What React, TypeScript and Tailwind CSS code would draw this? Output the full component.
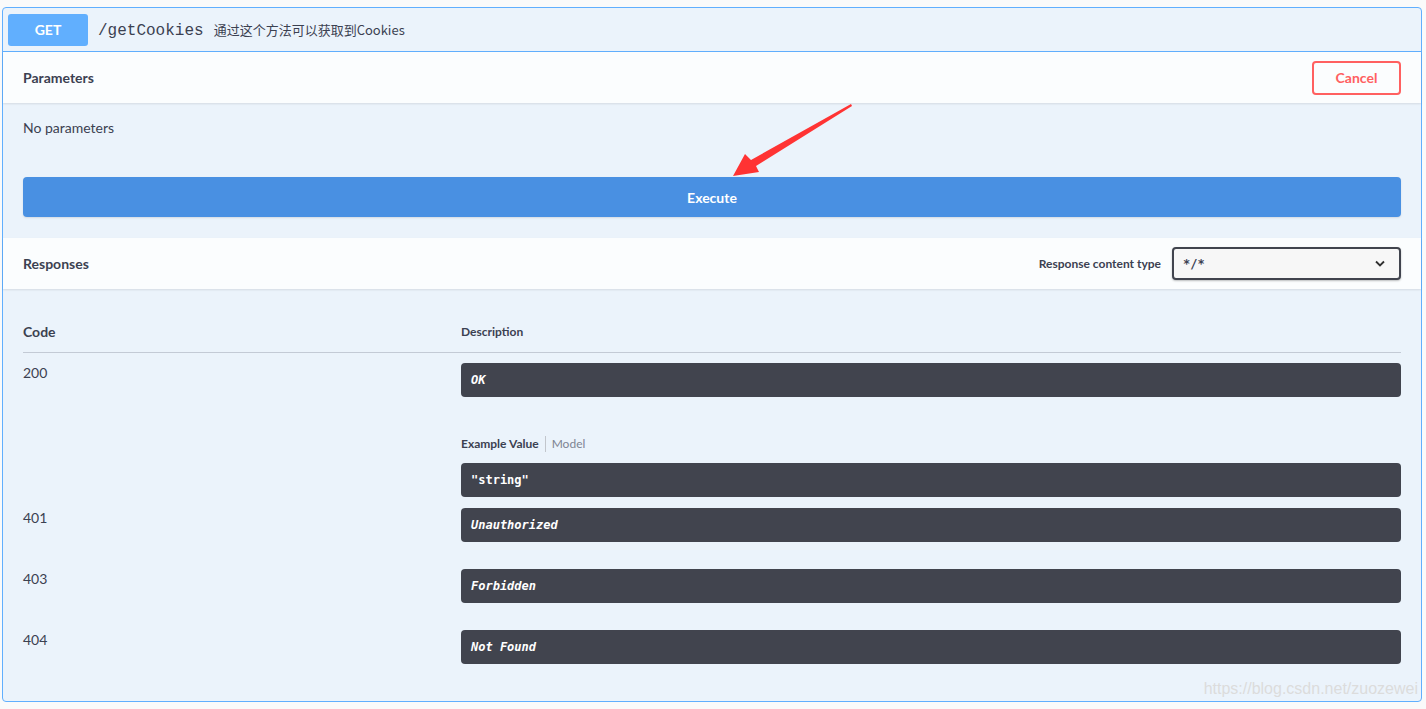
import React from "react";

const sans = "font-['Lato','Noto_Sans_CJK_SC',sans-serif]";
const mono = "font-['DejaVu_Sans_Mono','Liberation_Mono',monospace]";

function DarkBox({ children, italic = true }: { children: React.ReactNode; italic?: boolean }) {
  return (
    <div
      className={`h-[34px] w-full rounded-[4px] bg-[#41444e] px-[10px] flex items-center text-white text-[12px] font-bold ${mono} ${
        italic ? "italic" : ""
      }`}
    >
      {children}
    </div>
  );
}

function Row({ code, children, h }: { code: string; children: React.ReactNode; h?: string }) {
  return (
    <div className={`flex pt-[10px] ${h ?? ""}`}>
      <div className="w-[438px] shrink-0 text-[14px] leading-[20px] text-[#3b4151]">{code}</div>
      <div className="flex-1">{children}</div>
    </div>
  );
}

export default function App() {
  return (
    <div className={`relative w-[1426px] h-[709px] bg-[#fafafa] overflow-hidden ${sans}`}>
      <div className="ml-[2px] mr-[4px] mt-[7px] h-[695px] rounded-[4px] border border-[#61affe] bg-[#ebf3fb] flex flex-col">
        {/* header */}
        <div className="h-[44px] border-b border-[#61affe] flex items-center px-[5px]">
          <div className="w-[80px] h-[32px] rounded-[3px] bg-[#61affe] text-white font-bold text-[14px] flex items-center justify-center">
            GET
          </div>
          <div className={`ml-[10px] mt-[2px] text-[16px] text-[#3b4151] font-['Liberation_Mono',monospace]`}>/getCookies</div>
          <div className="ml-[10px] mt-[1px] text-[13px] text-[#3b4151] font-['Noto_Sans_CJK_SC',sans-serif]">
            通过这个方法可以获取到Cookies
          </div>
        </div>

        {/* parameters header */}
        <div className="h-[51px] bg-white/80 shadow-[0_1px_2px_rgba(0,0,0,0.1)] flex items-center justify-between pl-[20px] pr-[20px]">
          <div className="text-[14px] font-bold text-[#3b4151]">Parameters</div>
          <div className="w-[89px] h-[34px] rounded-[4px] border-2 border-[#ff6060] text-[#ff6060] text-[14px] font-bold flex items-center justify-center bg-transparent">
            Cancel
          </div>
        </div>

        {/* parameters body */}
        <div className="px-[20px] pt-[15px]">
          <div className="text-[14px] leading-[20px] text-[#3b4151]">No parameters</div>
        </div>
        <div className="px-[20px] pt-[39px]">
          <div className="h-[40px] rounded-[4px] bg-[#4990e2] text-white text-[14px] font-bold flex items-center justify-center shadow-[0_1px_2px_rgba(0,0,0,0.1)]">
            Execute
          </div>
        </div>

        {/* responses header */}
        <div className="mt-[21px] h-[51px] bg-white/80 shadow-[0_1px_2px_rgba(0,0,0,0.1)] flex items-center justify-between px-[20px]">
          <div className="text-[14px] font-bold text-[#3b4151]">Responses</div>
          <div className="flex items-center">
            <div className="text-[12px] font-bold text-[#3b4151] mr-[11px]">Response content type</div>
            <div className="w-[229px] h-[33px] rounded-[4px] border-2 border-[#41444e] bg-[#f7f7f7] flex items-center justify-between pl-[9px] pr-[14px] shadow-[0_1px_2px_rgba(0,0,0,0.25)]">
              <span className={`text-[12px] font-bold text-[#3b4151] ${mono}`}>*/*</span>
              <svg width="10" height="7" viewBox="0 0 10 7">
                <path d="M1 1.5 L5 5.5 L9 1.5" fill="none" stroke="#303030" strokeWidth="1.8" />
              </svg>
            </div>
          </div>
        </div>

        {/* table */}
        <div className="px-[20px] pt-[22px]">
          <div className="h-[42px] flex items-center border-b border-[#c3cad5]">
            <div className="w-[438px] text-[14px] font-bold text-[#3b4151]">Code</div>
            <div className="text-[12px] font-bold text-[#3b4151]">Description</div>
          </div>

          <Row code="200" h="pb-[1px]">
            <DarkBox>OK</DarkBox>
            <div className="mt-[39px] flex items-center h-[16px] text-[12px]">
              <span className="font-bold text-[#3b4151] pr-[6px]">Example Value</span>
              <span className="w-px h-[16px] bg-[#c2c6cc]"></span>
              <span className="pl-[6px] text-[#7d8492]">Model</span>
            </div>
            <div className="mt-[11px]">
              <DarkBox italic={false}>"string"</DarkBox>
            </div>
          </Row>
          <Row code="401" h="h-[61px]">
            <DarkBox>Unauthorized</DarkBox>
          </Row>
          <Row code="403" h="h-[61px]">
            <DarkBox>Forbidden</DarkBox>
          </Row>
          <Row code="404" h="h-[61px]">
            <DarkBox>Not Found</DarkBox>
          </Row>
        </div>
      </div>

      {/* annotation arrow */}
      <svg className="absolute left-0 top-0 pointer-events-none" width="1426" height="709">
        <polygon
          points="733,176 745,154 751,160 851,104 852,106 756,166 759,172"
          fill="#ff3333"
        />
      </svg>

      {/* watermark */}
      <div className="absolute right-[8px] top-[679px] text-[16px] leading-[20px] text-[#dcdcdc] font-['Liberation_Sans',Arial,sans-serif]">
        https://blog.csdn.net/zuozewei
      </div>
    </div>
  );
}
